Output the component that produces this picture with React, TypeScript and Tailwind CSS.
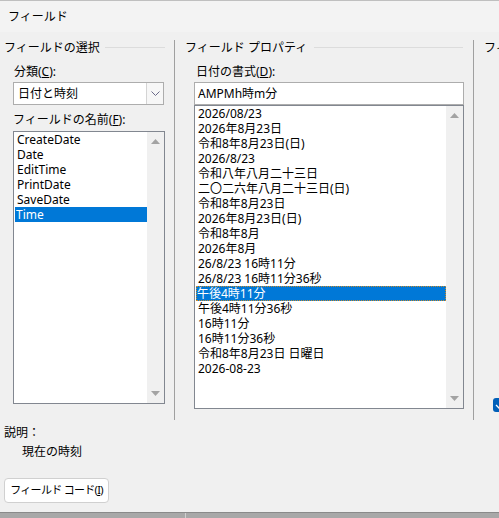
import type { ReactNode } from 'react';

const FONT = { fontFamily: '"Noto Sans", "Noto Sans CJK JP", sans-serif' };

const fieldNames = ['CreateDate', 'Date', 'EditTime', 'PrintDate', 'SaveDate', 'Time'];

const formats = [
  '2026/08/23',
  '2026年8月23日',
  '令和8年8月23日(日)',
  '2026/8/23',
  '令和八年八月二十三日',
  '二〇二六年八月二十三日(日)',
  '令和8年8月23日',
  '2026年8月23日(日)',
  '令和8年8月',
  '2026年8月',
  '26/8/23 16時11分',
  '26/8/23 16時11分36秒',
  '午後4時11分',
  '午後4時11分36秒',
  '16時11分',
  '16時11分36秒',
  '令和8年8月23日 日曜日',
  '2026-08-23',
];

function GroupHeader({ children, lineClass }: { children: ReactNode; lineClass: string }) {
  return (
    <div className="flex h-[15px] items-center leading-[15px]">
      <span className="whitespace-nowrap">{children}</span>
      <div className={`h-px flex-1 bg-[#dcdcdc] ${lineClass}`} />
    </div>
  );
}

// Disabled-looking Win32 scrollbar: light track, two grey arrows.
function ScrollTrack() {
  return (
    <div className="flex w-[17px] shrink-0 flex-col items-center justify-between bg-[#f0f0f0] py-[7px]">
      <svg width="9" height="5" viewBox="0 0 9 5">
        <path d="M0 5 L4.5 0 L9 5 Z" fill="#a3a3a3" />
      </svg>
      <svg width="9" height="5" viewBox="0 0 9 5">
        <path d="M0 0 L4.5 5 L9 0 Z" fill="#a3a3a3" />
      </svg>
    </div>
  );
}

function ListBox({
  items,
  selected,
  focused,
  className,
}: {
  items: string[];
  selected: number;
  focused?: boolean;
  className: string;
}) {
  return (
    <div className={`flex border border-[#828790] bg-white ${className}`}>
      <div className="flex-1 overflow-hidden pl-px">
        {items.map((it, i) => (
          <div
            key={it}
            className={
              i === selected
                ? `h-[15px] whitespace-nowrap bg-[#0078d7] pl-[1px] leading-[15px] text-white ${
                    focused ? 'outline outline-1 -outline-offset-1 outline-dotted outline-[#c98a2b]' : ''
                  }`
                : 'h-[15px] whitespace-nowrap pl-[2px] leading-[15px]'
            }
          >
            {it}
          </div>
        ))}
      </div>
      <ScrollTrack />
    </div>
  );
}

export default function App() {
  return (
    <div
      className="flex h-[518px] w-[499px] flex-col overflow-hidden bg-[#f0f0f0] text-[12px] text-black"
      style={FONT}
    >
      {/* title bar */}
      <div className="flex h-[32px] shrink-0 items-center border-t border-[#bfbfbf] bg-[#f3f3f3] pl-[8px]">
        フィールド
      </div>

      <div className="flex h-[388px] shrink-0 pt-[8px]">
        {/* field selection */}
        <div className="w-[174px] shrink-0 pl-[4px]">
          <GroupHeader lineClass="ml-[5px] mr-[9px]">フィールドの選択</GroupHeader>
          <div className="ml-[10px] mt-[9px] leading-[15px]">
            分類(<span className="underline">C</span>):
          </div>
          <div className="ml-[9px] mt-[3px] flex h-[23px] w-[151px] border border-[#adadad] bg-white">
            <div className="flex-1 pl-[4px] leading-[21px]">日付と時刻</div>
            <div className="flex w-[17px] items-center justify-center border-l border-[#d4d4d4] bg-[#f7f7f7]">
              <svg width="9" height="5" viewBox="0 0 9 5">
                <path d="M0.5 0.5 L4.5 4.5 L8.5 0.5" fill="none" stroke="#6b6b8a" strokeWidth="1" />
              </svg>
            </div>
          </div>
          <div className="ml-[9px] mt-[7px] leading-[15px]">
            フィールドの名前(<span className="underline">F</span>):
          </div>
          <ListBox items={fieldNames} selected={5} className="ml-[9px] mt-[4px] h-[273px] w-[152px]" />
        </div>

        <div className="w-px shrink-0 bg-[#a0a0a0]" />

        {/* field properties */}
        <div className="w-[298px] shrink-0 pl-[10px]">
          <GroupHeader lineClass="ml-[7px] mr-[10px]">フィールド プロパティ</GroupHeader>
          <div className="ml-[11px] mt-[9px] leading-[15px]">
            日付の書式(<span className="underline">D</span>):
          </div>
          <div className="ml-[9px] mt-[3px] h-[23px] w-[270px] border border-[#adadad] bg-white pl-[3px] leading-[21px]">
            AMPMh時m分
          </div>
          <ListBox items={formats} selected={12} focused className="ml-[9px] h-[304px] w-[270px]" />
        </div>

        <div className="w-px shrink-0 bg-[#a0a0a0]" />

        {/* field options, cut off at the window edge */}
        <div className="min-w-0 flex-1 overflow-hidden pl-[10px]">
          <div className="h-[15px] whitespace-nowrap leading-[15px]">フィールド オプション</div>
          <div className="ml-[9px] mt-[343px] flex h-[14px] w-[14px] items-center justify-center rounded-[3px] bg-[#005fb8]">
            <svg width="10" height="8" viewBox="0 0 10 8">
              <path d="M1 4 L4 7 L9 1" fill="none" stroke="#ffffff" strokeWidth="1.3" />
            </svg>
          </div>
        </div>
      </div>

      {/* description */}
      <div className="ml-[4px] mt-[5px] leading-[15px]">説明：</div>
      <div className="ml-[22px] mt-[4px] leading-[15px]">現在の時刻</div>

      <div className="ml-[4px] mt-[19px] flex h-[25px] w-[105px] items-center justify-center whitespace-nowrap rounded-[4px] border border-[#d0d0d0] bg-white text-[11px] tracking-[-0.7px]">
        フィールド コード(<span className="underline">I</span>)
      </div>

      <div className="flex-1" />
      <div className="flex h-[6px] shrink-0 border-t border-[#8a8a8a] bg-[#a8a8a8]">
        <div className="w-[185px]" />
        <div className="w-px bg-[#d0d0d0]" />
      </div>
    </div>
  );
}
